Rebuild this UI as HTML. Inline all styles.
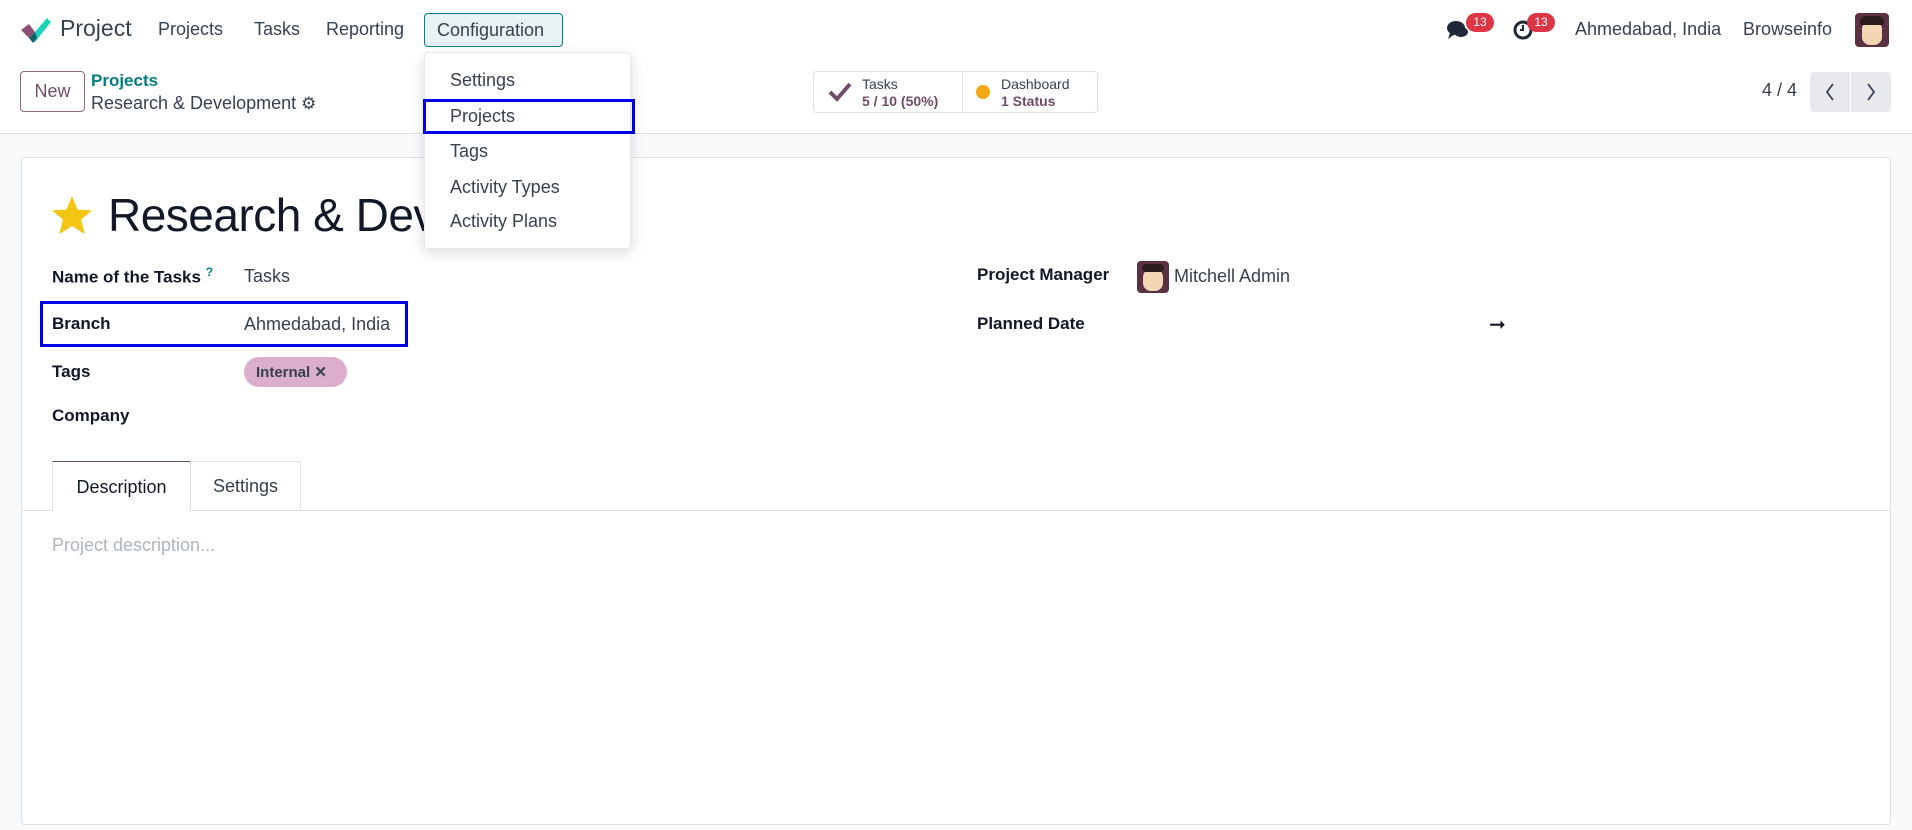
<!DOCTYPE html>
<html><head><meta charset="utf-8"><style>
*{box-sizing:border-box;margin:0;padding:0}
body{width:1912px;height:830px;overflow:hidden;background:#f9fafb;font-family:"Liberation Sans",sans-serif;color:#374151;font-size:18px;position:relative}
.a{position:absolute;white-space:nowrap}
.b{font-weight:bold;color:#111827;font-size:17px}
</style></head><body>
<div class="a" style="left:0;top:0;width:1912px;height:134px;background:#fff;border-bottom:1px solid #dee2e6"></div>
<svg class="a" style="left:19px;top:16px" width="32" height="28" viewBox="0 0 32 28"><path d="M2 14 L10 8 L16 16 L10 22Z" fill="#8d4e74"/><path d="M10 22 L16 16 L28 2 L32 6 L16 26 Z" fill="#1ad3bb"/><path d="M10 22 L16 16 L18 22 L14 27Z" fill="#155d6e"/></svg>
<div class="a" style="left:60px;top:15px;font-size:23px;color:#374151">Project</div>
<div class="a" style="left:158px;top:19px">Projects</div>
<div class="a" style="left:254px;top:19px">Tasks</div>
<div class="a" style="left:326px;top:19px">Reporting</div>
<div class="a" style="left:424px;top:13px;width:139px;height:34px;background:#e6f2f3;border:1px solid #017e84;border-radius:4px;padding:6px 0 0 12px">Configuration</div>
<svg class="a" style="left:1446px;top:19px" width="24" height="22" viewBox="0 0 24 22"><ellipse cx="10" cy="9" rx="9" ry="7" fill="#1f2937"/><path d="M4 14 L2 20 L9 15Z" fill="#1f2937"/><ellipse cx="15" cy="13" rx="7" ry="5" fill="#1f2937"/></svg>
<div class="a" style="left:1466px;top:13px;width:28px;height:19px;background:#dc3545;border-radius:10px;color:#fff;font-size:12px;text-align:center;line-height:19px">13</div>
<svg class="a" style="left:1512px;top:18px" width="22" height="24" viewBox="0 0 22 24"><circle cx="11" cy="12" r="8" fill="none" stroke="#1f2937" stroke-width="3"/><path d="M11 7 V12 H8" stroke="#1f2937" stroke-width="2" fill="none"/></svg>
<div class="a" style="left:1527px;top:13px;width:28px;height:19px;background:#dc3545;border-radius:10px;color:#fff;font-size:12px;text-align:center;line-height:19px">13</div>
<div class="a" style="left:1575px;top:19px">Ahmedabad, India</div>
<div class="a" style="left:1743px;top:19px">Browseinfo</div>
<div class="a" style="left:1855px;top:13px;width:34px;height:34px;background:#5a3142;border-radius:4px;overflow:hidden"><div style="position:absolute;left:7px;top:8px;width:20px;height:24px;background:#f5d6b4;border-radius:8px"></div><div style="position:absolute;left:5px;top:3px;width:24px;height:9px;background:#2b1d1d;border-radius:6px 6px 2px 2px"></div></div>
<div class="a" style="left:20px;top:71px;width:65px;height:41px;border:1px solid #8d6a7e;border-radius:4px;color:#714b67;text-align:center;line-height:39px">New</div>
<div class="a" style="left:91px;top:71px;color:#017e84;font-weight:bold;font-size:17px">Projects</div>
<div class="a" style="left:91px;top:93px">Research &amp; Development <span style="font-size:17px">⚙</span></div>
<div class="a" style="left:813px;top:71px;width:285px;height:42px;border:1px solid #dee2e6;border-radius:4px;background:#fff"></div>
<div class="a" style="left:962px;top:71px;width:1px;height:42px;background:#dee2e6"></div>
<svg class="a" style="left:828px;top:81px" width="24" height="22" viewBox="0 0 24 22"><path d="M2 11 L9 18 L22 3" stroke="#714b67" stroke-width="4" fill="none"/></svg>
<div class="a" style="left:862px;top:76px;font-size:14px;line-height:17px">Tasks<br><b style="color:#714b67">5 / 10 (50%)</b></div>
<div class="a" style="left:976px;top:85px;width:14px;height:14px;border-radius:50%;background:#f3a712"></div>
<div class="a" style="left:1001px;top:76px;font-size:14px;line-height:17px">Dashboard<br><b style="color:#714b67">1 Status</b></div>
<div class="a" style="left:1762px;top:80px">4 / 4</div>
<div class="a" style="left:1810px;top:72px;width:81px;height:40px;background:#e7e9ed;border-radius:4px"></div>
<div class="a" style="left:1850px;top:72px;width:1px;height:40px;background:#fff"></div>
<svg class="a" style="left:1824px;top:83px" width="12" height="18" viewBox="0 0 12 18"><path d="M9 1 L3 9 L9 17" stroke="#374151" stroke-width="1.8" fill="none"/></svg>
<svg class="a" style="left:1865px;top:83px" width="12" height="18" viewBox="0 0 12 18"><path d="M3 1 L9 9 L3 17" stroke="#374151" stroke-width="1.8" fill="none"/></svg>
<div class="a" style="left:21px;top:157px;width:1870px;height:668px;background:#fff;border:1px solid #dee2e6;border-radius:4px"></div>
<svg class="a" style="left:50px;top:194px" width="44" height="42" viewBox="0 0 24 23"><path d="M12 1 L15 8.5 L23 9 L17 14 L19 22 L12 17.5 L5 22 L7 14 L1 9 L9 8.5Z" fill="#f3c614"/></svg>
<div class="a" style="left:108px;top:188px;font-size:46px;color:#111827;letter-spacing:-0.5px">Research &amp; Deve</div>
<div class="a b" style="left:52px;top:265px">Name of the Tasks <sup style="color:#017e84;font-size:12px">?</sup></div>
<div class="a" style="left:244px;top:266px">Tasks</div>
<div class="a b" style="left:52px;top:314px">Branch</div>
<div class="a" style="left:244px;top:314px">Ahmedabad, India</div>
<div class="a" style="left:40px;top:301px;width:368px;height:46px;border:3px solid #0000e6"></div>
<div class="a b" style="left:52px;top:362px">Tags</div>
<div class="a" style="left:244px;top:357px;width:103px;height:30px;background:#dbaecb;border-radius:15px;font-size:15px;font-weight:bold;color:#374151;padding:6px 0 0 12px">Internal ✕</div>
<div class="a b" style="left:52px;top:406px">Company</div>
<div class="a b" style="left:977px;top:265px">Project Manager</div>
<div class="a" style="left:1137px;top:261px;width:32px;height:32px;background:#5a3142;border-radius:4px;overflow:hidden"><div style="position:absolute;left:6px;top:8px;width:20px;height:22px;background:#f5d6b4;border-radius:8px"></div><div style="position:absolute;left:5px;top:3px;width:22px;height:8px;background:#2b1d1d;border-radius:6px"></div></div>
<div class="a" style="left:1174px;top:266px">Mitchell Admin</div>
<div class="a b" style="left:977px;top:314px">Planned Date</div>
<div class="a" style="left:1489px;top:312px;font-size:20px;color:#111827">➞</div>
<div class="a" style="left:22px;top:510px;width:1868px;height:1px;background:#dee2e6"></div>
<div class="a" style="left:52px;top:461px;width:139px;height:50px;background:#fff;border:1px solid #dee2e6;border-top-color:#714b67;border-bottom:none;text-align:center;line-height:50px;color:#111827">Description</div>
<div class="a" style="left:190px;top:461px;width:111px;height:49px;border:1px solid #dee2e6;border-bottom:none;text-align:center;line-height:49px">Settings</div>
<div class="a" style="left:52px;top:535px;color:#adb5bd">Project description...</div>
<div class="a" style="left:424px;top:52px;width:207px;height:197px;background:#fff;border:1px solid #e5e7eb;border-radius:4px;box-shadow:0 4px 14px rgba(0,0,0,.15)"></div>
<div class="a" style="left:450px;top:70px">Settings</div>
<div class="a" style="left:450px;top:106px">Projects</div>
<div class="a" style="left:450px;top:141px">Tags</div>
<div class="a" style="left:450px;top:177px">Activity Types</div>
<div class="a" style="left:450px;top:211px">Activity Plans</div>
<div class="a" style="left:423px;top:99px;width:212px;height:35px;border:3px solid #0000e6"></div>
</body></html>
